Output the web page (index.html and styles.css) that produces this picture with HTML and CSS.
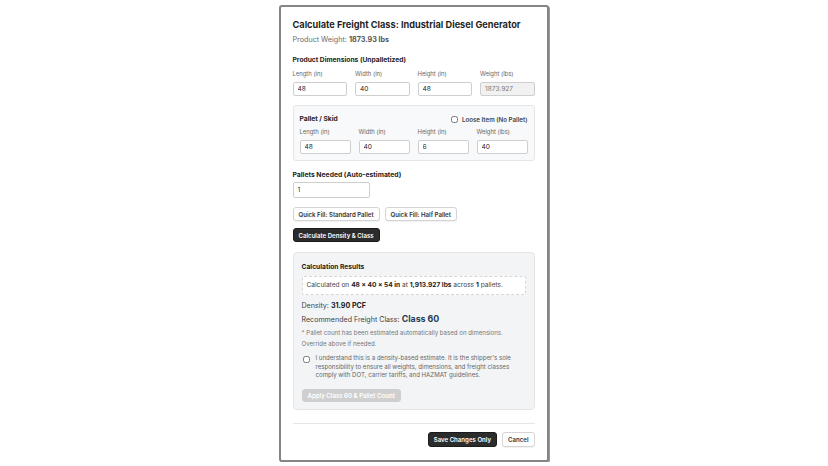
FILE: index.html
```html
<!DOCTYPE html>
<html lang="en">
<head>
  <meta charset="UTF-8">
  <meta name="viewport" content="width=device-width, initial-scale=1.0">
  <title>Calculate Freight Class</title>
  <link rel="stylesheet" href="styles.css">
</head>
<body>
  <div class="modal">
    <h2 class="title">Calculate Freight Class: Industrial Diesel Generator</h2>
    <p class="subtitle">Product Weight: <b>1873.93 lbs</b></p>

    <h3 class="section-title">Product Dimensions (Unpalletized)</h3>
    <div class="dims">
      <label class="field"><span>Length (in)</span><input type="text" value="48"></label>
      <label class="field"><span>Width (in)</span><input type="text" value="40"></label>
      <label class="field"><span>Height (in)</span><input type="text" value="48"></label>
      <label class="field"><span>Weight (lbs)</span><input type="text" value="1873.927" class="readonly" readonly></label>
    </div>

    <div class="pallet-box">
      <div class="pallet-head">
        <h4>Pallet / Skid</h4>
        <label class="loose"><input type="checkbox"> Loose Item (No Pallet)</label>
      </div>
      <div class="dims">
        <label class="field"><span>Length (in)</span><input type="text" value="48"></label>
        <label class="field"><span>Width (in)</span><input type="text" value="40"></label>
        <label class="field"><span>Height (in)</span><input type="text" value="6"></label>
        <label class="field"><span>Weight (lbs)</span><input type="text" value="40"></label>
      </div>
    </div>

    <label class="pallets">
      <span>Pallets Needed (Auto-estimated)</span>
      <input type="text" value="1">
    </label>

    <div class="quick">
      <button class="btn btn-light">Quick Fill: Standard Pallet</button>
      <button class="btn btn-light">Quick Fill: Half Pallet</button>
    </div>
    <button class="btn btn-dark calc">Calculate Density &amp; Class</button>

    <div class="results">
      <h4>Calculation Results</h4>
      <div class="calc-line">Calculated on <b>48 × 40 × 54 in</b> at <b>1,913.927 lbs</b> across <b>1</b> pallets.</div>
      <p class="density">Density: <b>31.90 PCF</b></p>
      <p class="klass">Recommended Freight Class: <b>Class 60</b></p>
      <p class="note">* Pallet count has been estimated automatically based on dimensions. Override above if needed.</p>
      <label class="agree">
        <input type="checkbox">
        <span>I understand this is a density-based estimate. It is the shipper's sole responsibility to ensure all weights, dimensions, and freight classes comply with DOT, carrier tariffs, and HAZMAT guidelines.</span>
      </label>
      <button class="btn btn-disabled" disabled>Apply Class 60 &amp; Pallet Count</button>
    </div>

    <div class="footer">
      <button class="btn btn-dark">Save Changes Only</button>
      <button class="btn btn-light">Cancel</button>
    </div>
  </div>
</body>
</html>
```

FILE: styles.css
```css
body {
  margin: 0;
  background-color: #fff;
  font-family: Inter, "Noto Sans", sans-serif;
  color: #222;
  display: flex;
  justify-content: center;
  padding-top: 5px;
}

.modal {
  box-sizing: border-box;
  width: 270px;
  height: 457px;
  margin-left: -1px;
  background-color: #fff;
  border: 2px solid #858585;
  border-radius: 3px;
  box-shadow: 1px 1px 0 #9a9a9a;
  padding: 11px 12px 0 12px;
}

.title {
  font-size: 9.2px;
  font-weight: 700;
  margin: 0;
  line-height: 13px;
  color: #1f1f1f;
}

.subtitle {
  font-size: 7.2px;
  color: #6b6b6b;
  margin: 3px 0 0;
  line-height: 11px;
}

.subtitle b {
  color: #555;
}

.section-title {
  font-size: 6.7px;
  font-weight: 700;
  margin: 10px 0 0;
  line-height: 10px;
}

.dims {
  display: grid;
  grid-template-columns: repeat(4, 1fr);
  gap: 8px;
  margin-top: 4px;
}

.field {
  display: flex;
  flex-direction: column;
}

.field span {
  font-size: 5.9px;
  color: #666;
  line-height: 9px;
  margin-bottom: 4px;
}

input[type="text"] {
  box-sizing: border-box;
  width: 100%;
  height: 14px;
  border: 1px solid #cfcfcf;
  border-radius: 2px;
  font-family: inherit;
  font-size: 6.6px;
  padding: 0 4px;
  color: #222;
  background-color: #fff;
}

input.readonly {
  background-color: #f1f1f1;
  color: #777;
}

.pallet-box {
  margin-top: 9px;
  background-color: #f8f9fa;
  border: 1px solid #e6e6e6;
  border-radius: 3px;
  padding: 8px 6px 6px 6px;
}

.pallet-head {
  display: flex;
  justify-content: space-between;
  align-items: center;
}

.pallet-head h4 {
  margin: 0;
  font-size: 6.7px;
  font-weight: 700;
  line-height: 10px;
}

.loose {
  display: flex;
  align-items: center;
  font-size: 6.2px;
  font-weight: 600;
  color: #444;
}

input[type="checkbox"] {
  width: 7px;
  height: 7px;
  margin: 0 4px 0 0;
}

.pallet-box .dims {
  margin-top: 3px;
}

.pallets {
  display: flex;
  flex-direction: column;
  margin-top: 9px;
}

.pallets span {
  font-size: 6.8px;
  font-weight: 700;
  line-height: 10px;
  margin-bottom: 2px;
}

.pallets input {
  width: 77px;
  height: 16px;
}

.quick {
  display: flex;
  gap: 5px;
  margin-top: 9px;
}

.btn {
  font-family: inherit;
  font-size: 6.1px;
  font-weight: 600;
  height: 14px;
  padding: 0 5px;
  border-radius: 3px;
  cursor: pointer;
}

.btn-light {
  background-color: #fff;
  color: #333;
  border: 1px solid #d4d4d4;
  box-shadow: 0 1px 1px rgba(0, 0, 0, 0.06);
}

.btn-dark {
  background-color: #2c2c2c;
  color: #fff;
  border: 1px solid #1b1b1b;
}

.calc {
  display: block;
  margin-top: 7px;
}

.results {
  margin-top: 10px;
  background-color: #f3f4f6;
  border: 1px solid #e4e4e4;
  border-radius: 4px;
  padding: 9px 8px 8px 8px;
  height: 158px;
  box-sizing: border-box;
}

.results h4 {
  margin: 0;
  font-size: 6.7px;
  font-weight: 700;
  line-height: 10px;
}

.calc-line {
  margin-top: 4px;
  background-color: #fff;
  border: 1px dashed #d6d6d6;
  border-radius: 2px;
  font-size: 6.6px;
  color: #444;
  line-height: 17px;
  padding: 0 4px;
}

.calc-line b {
  color: #222;
}

.density {
  margin: 6px 0 0;
  font-size: 7.1px;
  color: #444;
  line-height: 10px;
}

.density b {
  color: #222;
}

.klass {
  margin: 2px 0 0;
  font-size: 7.1px;
  color: #444;
  line-height: 11px;
}

.klass b {
  font-size: 8.8px;
  color: #263d5a;
}

.note {
  margin: 2px 0 0;
  font-size: 6.1px;
  color: #777;
  line-height: 11px;
}

.agree {
  display: flex;
  align-items: flex-start;
  margin-top: 5px;
  font-size: 6.1px;
  color: #666;
  line-height: 8.5px;
}

.agree input {
  margin: 2px 6px 0 1px;
  flex: none;
}

.btn-disabled {
  margin-top: 9px;
  background-color: #cfcfcf;
  color: #fff;
  border: 1px solid #cfcfcf;
  height: 13px;
}

.footer {
  margin-top: 13px;
  border-top: 1px solid #e6e6e6;
  padding-top: 8px;
  display: flex;
  justify-content: flex-end;
  gap: 5px;
}

.footer .btn {
  height: 15px;
}
```
